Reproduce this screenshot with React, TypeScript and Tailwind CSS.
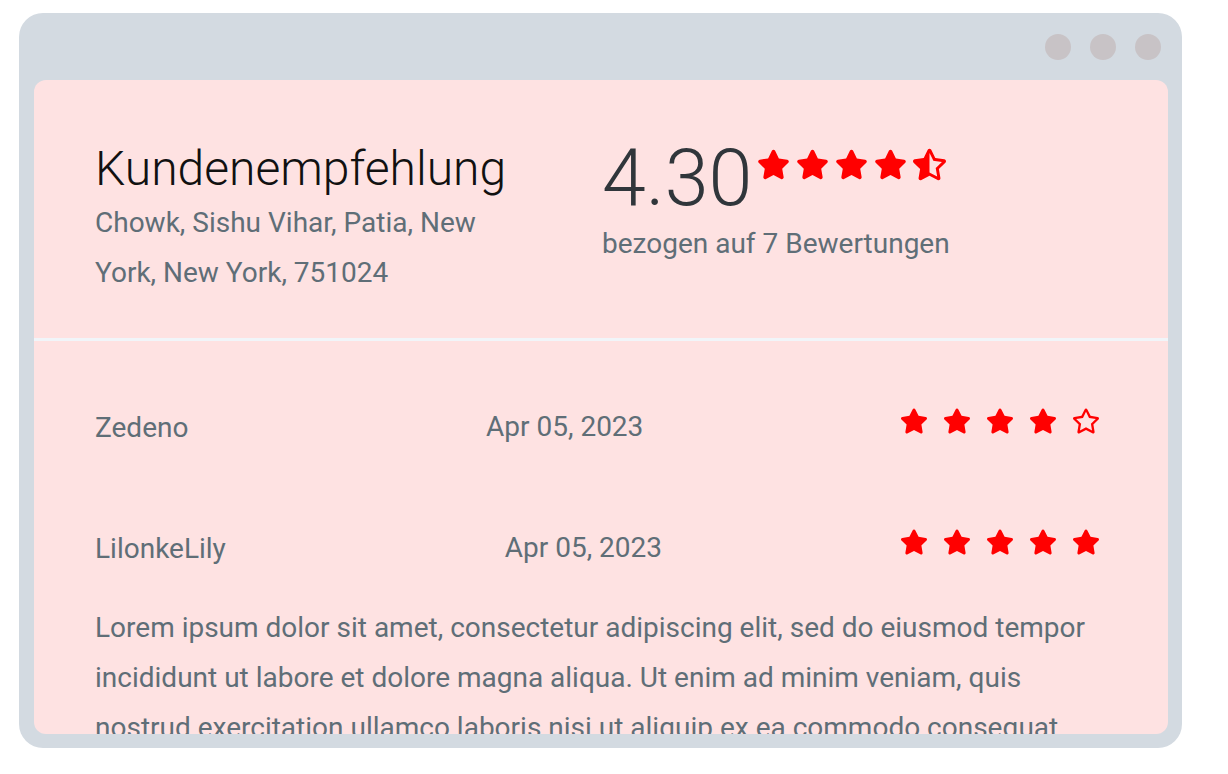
import { FaStar, FaRegStar, FaStarHalfAlt } from 'react-icons/fa'

interface Review {
  name: string
  date: string
  rating: number
  text?: string
}

const reviews: Review[] = [
  { name: 'Zedeno', date: 'Apr 05, 2023', rating: 4 },
  {
    name: 'LilonkeLily',
    date: 'Apr 05, 2023',
    rating: 5,
    text: 'Lorem ipsum dolor sit amet, consectetur adipiscing elit, sed do eiusmod tempor incididunt ut labore et dolore magna aliqua. Ut enim ad minim veniam, quis nostrud exercitation ullamco laboris nisi ut aliquip ex ea commodo consequat.',
  },
]

function Stars({ rating, size, className = '' }: { rating: number; size: number; className?: string }) {
  return (
    <div className={`flex items-center text-[#ff0000] ${className}`}>
      {[0, 1, 2, 3, 4].map((i) => {
        if (rating >= i + 1) return <FaStar key={i} size={size} />
        if (rating > i) return <FaStarHalfAlt key={i} size={size} />
        return <FaRegStar key={i} size={size} />
      })}
    </div>
  )
}

export default function App() {
  return (
    <div className="min-h-screen bg-white pt-[13px] pl-[19px]" style={{ fontFamily: 'Roboto, "Noto Sans", sans-serif' }}>
      <div className="w-[1163px] h-[735px] rounded-[24px] bg-[#d3dae1] pl-[15px] pr-[14px] pb-[14px] flex flex-col">
        {/* Window bar */}
        <div className="h-[67px] shrink-0 flex items-center justify-end gap-[19px] pr-[7px]">
          <span className="w-[26px] h-[26px] rounded-full bg-[#c8c3c6]" />
          <span className="w-[26px] h-[26px] rounded-full bg-[#c8c3c6]" />
          <span className="w-[26px] h-[26px] rounded-full bg-[#c8c3c6]" />
        </div>

        {/* Panel */}
        <div className="flex-1 min-h-0 rounded-[12px] bg-[#fee2e2] overflow-hidden">
          {/* Header */}
          <div className="flex px-[61px] pt-[60px] pb-[40px]">
            <div className="w-[507px] shrink-0">
              <h1 className="text-[48px] leading-[58px] font-light text-[#111111]">Kundenempfehlung</h1>
              <p className="max-w-[420px] text-[28px] leading-[50px] text-[#5f6e77]">
                Chowk, Sishu Vihar, Patia, New York, New York, 751024
              </p>
            </div>
            <div>
              <div className="flex items-start">
                <span className="text-[79px] leading-[76px] font-light text-[#30363b]">4.30</span>
                <Stars rating={4.3} size={33} className="gap-[6px] mt-[8px] ml-[5px]" />
              </div>
              <p className="mt-[10px] text-[28px] leading-[36px] text-[#5f6e77]">bezogen auf 7 Bewertungen</p>
            </div>
          </div>

          <div className="h-[3px] bg-[#f1f5f9]" />

          {/* Reviews */}
          <div className="pl-[61px] pr-[68px] pt-[61px]">
            {reviews.map((review, idx) => (
              <div key={review.name} className={idx > 0 ? 'mt-[71px]' : ''}>
                <div className="h-[50px] flex items-center justify-between text-[28px] text-[#5f6e77]">
                  <span className="leading-[50px] pt-[2px]">{review.name}</span>
                  <span className="leading-[50px] pl-[41px]">{review.date}</span>
                  <Stars rating={review.rating} size={28} className="gap-[15px] mb-[12px]" />
                </div>
                {review.text && (
                  <p className="mt-[30px] text-[28px] leading-[50px] text-[#5f6e77]">{review.text}</p>
                )}
              </div>
            ))}
          </div>
        </div>
      </div>
    </div>
  )
}
